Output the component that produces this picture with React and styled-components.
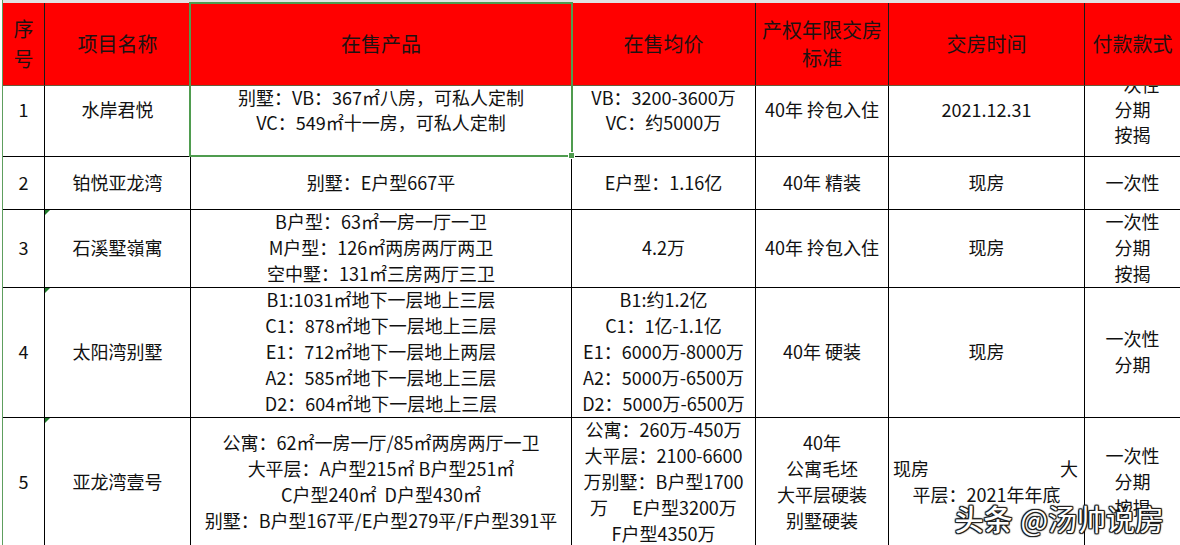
import React from "react";
import styled, { createGlobalStyle } from "styled-components";

const GlobalStyle = createGlobalStyle`
  html, body { margin: 0; padding: 0; background: #fff; overflow: hidden; }
  #root { width: 1180px; height: 545px; }
`;

const FONT = `"Noto Sans CJK SC", "Microsoft YaHei", "Noto Sans", sans-serif`;

const Page = styled.div`
  position: relative;
  width: 1180px;
  height: 545px;
  overflow: hidden;
  background: #fff;
  font-family: ${FONT};
  color: #111;
`;

const Frame = styled.div`
  margin-left: 2px;
  border-left: 1px solid #5e9e5e;
  height: 100%;
`;

const TopStrip = styled.div`
  height: 3px;
  background: #e2e2e2;
`;

const Sheet = styled.div`
  position: relative;
  display: grid;
  grid-template-columns: 42px 146px 381px 184px 133px 196px 96px;
  grid-template-rows: 83px 71px 53px 78px 130px 130px;
`;

const HeadCell = styled.div`
  box-sizing: border-box;
  background: #ff0000;
  border-right: 1px solid #1a1a1a;
  border-bottom: 1px solid #6a5a3a;
  font-size: 20px;
  line-height: ${(p) => (p.$tall ? "30px" : "28px")};
  color: #1e1212;
  display: flex;
  flex-direction: column;
  align-items: center;
  justify-content: center;
  text-align: center;
  overflow: hidden;
`;

const Cell = styled.div`
  position: relative;
  box-sizing: border-box;
  border-right: 1px solid #000;
  border-bottom: 1px solid #000;
  font-size: 18px;
  line-height: ${(p) => (p.$shift ? "25px" : "26px")};
  padding-bottom: ${(p) => (p.$shift ? "23px" : "3px")};
  display: flex;
  flex-direction: column;
  align-items: center;
  justify-content: center;
  text-align: center;
  overflow: hidden;
`;

const Line = styled.span`
  display: block;
  white-space: pre;
  flex: none;
`;

const SplitLine = styled.span`
  display: flex;
  justify-content: space-between;
  align-self: stretch;
  padding: 0 6px 0 4px;
  white-space: pre;
  flex: none;
`;

const Marker = styled.span`
  position: absolute;
  top: 0;
  left: 0;
  width: 0;
  height: 0;
  border-top: 5px solid #1f7a2a;
  border-right: 5px solid transparent;
`;

const Selection = styled.div`
  position: absolute;
  left: 186px;
  top: -1px;
  width: 384px;
  height: 155px;
  box-sizing: border-box;
  border: 2px solid #4f9c4f;
  pointer-events: none;
`;

const Handle = styled.span`
  position: absolute;
  right: -4px;
  bottom: -4px;
  width: 5px;
  height: 5px;
  background: #4f9c4f;
  border: 1px solid #fff;
`;

const Watermark = styled.div`
  position: absolute;
  right: 16px;
  bottom: 10px;
  font-family: ${FONT};
  font-size: 29px;
  line-height: 34px;
  color: #fff;
  white-space: pre;
  text-shadow: 1px 0 0 #222, -1px 0 0 #222, 0 1px 0 #222, 0 -1px 0 #222,
    1px 1px 1px #000, -1px -1px 1px #000, 1px -1px 1px #000, -1px 1px 1px #000;
`;

const WatermarkBrand = styled.span`
  font-weight: 500;
  margin-right: 8px;
`;

const headers = [
  { lines: ["序", "号"], tall: true },
  { lines: ["项目名称"] },
  { lines: ["在售产品"] },
  { lines: ["在售均价"] },
  { lines: ["产权年限交房", "标准"] },
  { lines: ["交房时间"] },
  { lines: ["付款款式"] },
];

const rows = [
  {
    shift: true,
    cells: [
      ["1"],
      ["水岸君悦"],
      ["别墅：VB：367㎡八房，可私人定制", "VC：549㎡十一房，可私人定制"],
      ["VB：3200-3600万", "VC：约5000万"],
      ["40年 拎包入住"],
      ["2021.12.31"],
      ["一次性", "分期", "按揭"],
    ],
  },
  {
    cells: [
      ["2"],
      ["铂悦亚龙湾"],
      ["别墅：E户型667平"],
      ["E户型：1.16亿"],
      ["40年 精装"],
      ["现房"],
      ["一次性"],
    ],
  },
  {
    marker: true,
    cells: [
      ["3"],
      ["石溪墅嶺寓"],
      ["B户型：63㎡一房一厅一卫", "M户型：126㎡两房两厅两卫", "空中墅：131㎡三房两厅三卫"],
      ["4.2万"],
      ["40年 拎包入住"],
      ["现房"],
      ["一次性", "分期", "按揭"],
    ],
  },
  {
    marker: true,
    cells: [
      ["4"],
      ["太阳湾别墅"],
      [
        "B1:1031㎡地下一层地上三层",
        "C1：878㎡地下一层地上三层",
        "E1：712㎡地下一层地上两层",
        "A2：585㎡地下一层地上三层",
        "D2：604㎡地下一层地上三层",
      ],
      ["B1:约1.2亿", "C1：1亿-1.1亿", "E1：6000万-8000万", "A2：5000万-6500万", "D2：5000万-6500万"],
      ["40年 硬装"],
      ["现房"],
      ["一次性", "分期"],
    ],
  },
  {
    marker: true,
    cells: [
      ["5"],
      ["亚龙湾壹号"],
      [
        "公寓：62㎡一房一厅/85㎡两房两厅一卫",
        "大平层：A户型215㎡ B户型251㎡",
        "C户型240㎡  D户型430㎡",
        "别墅：B户型167平/E户型279平/F户型391平",
      ],
      ["公寓：260万-450万", "大平层：2100-6600", "万别墅：B户型1700", "万      E户型3200万", "F户型4350万"],
      ["40年", "公寓毛坯", "大平层硬装", "别墅硬装"],
      [{ split: ["现房", "大"] }, "平层：2021年年底"],
      ["一次性", "分期", "按揭"],
    ],
  },
];

function renderLine(line, i) {
  if (typeof line === "string") return <Line key={i}>{line}</Line>;
  return (
    <SplitLine key={i}>
      <span>{line.split[0]}</span>
      <span>{line.split[1]}</span>
    </SplitLine>
  );
}

export default function App() {
  return (
    <Page>
      <GlobalStyle />
      <Frame>
        <TopStrip />
        <Sheet>
          {headers.map((h, i) => (
            <HeadCell key={`h${i}`} $tall={h.tall}>
              {h.lines.map((l, j) => (
                <Line key={j}>{l}</Line>
              ))}
            </HeadCell>
          ))}
          {rows.map((r, ri) =>
            r.cells.map((c, ci) => (
              <Cell key={`${ri}-${ci}`} $shift={r.shift}>
                {r.marker && ci === 1 && <Marker />}
                {c.map(renderLine)}
              </Cell>
            ))
          )}
          <Selection>
            <Handle />
          </Selection>
        </Sheet>
      </Frame>
      <Watermark>
        <WatermarkBrand>头条</WatermarkBrand>@汤帅说房
      </Watermark>
    </Page>
  );
}
